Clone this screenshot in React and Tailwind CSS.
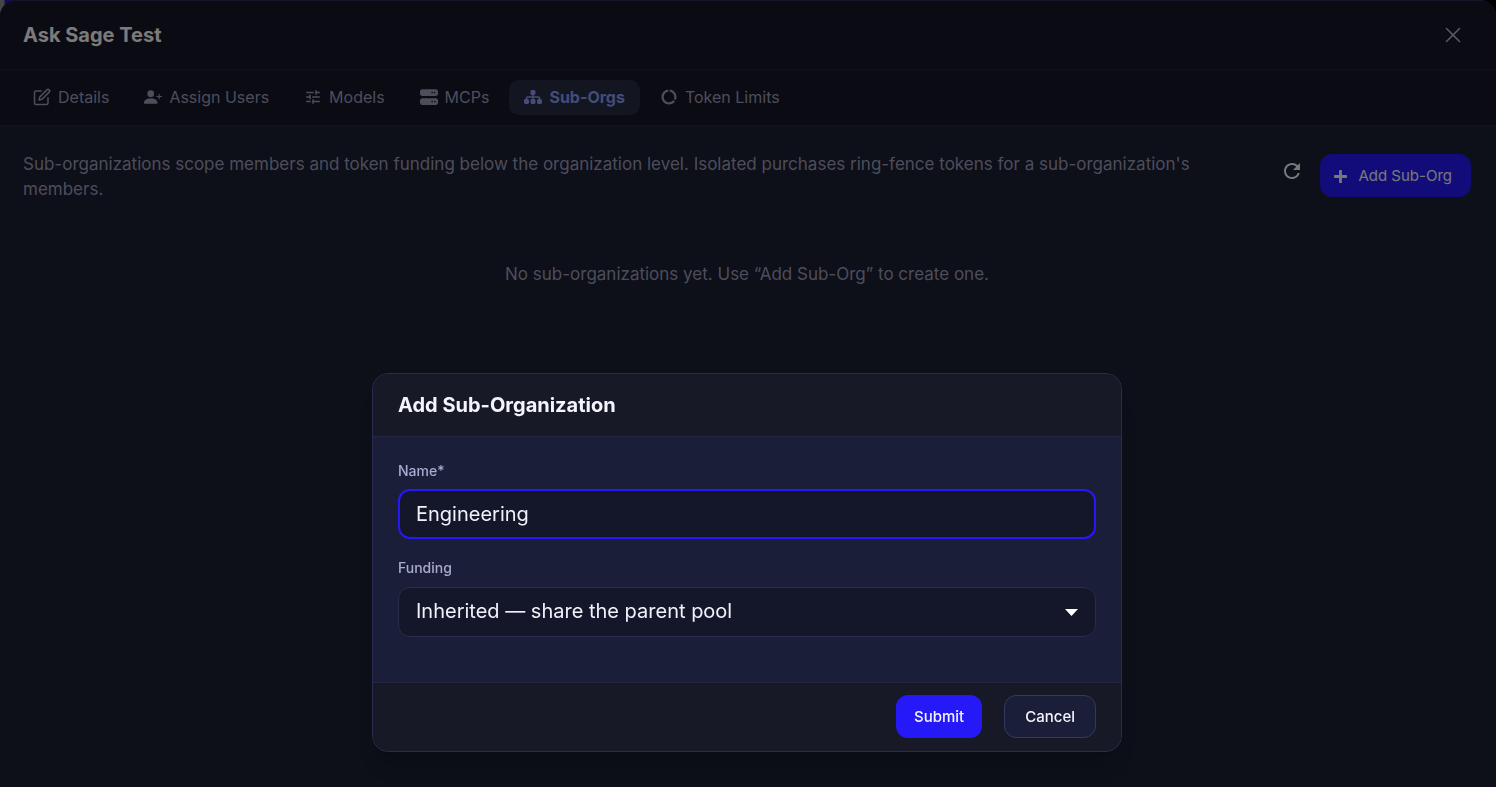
import { useState } from 'react';
import { BsPersonPlusFill } from 'react-icons/bs';
import { FaPlus } from 'react-icons/fa';
import { FaServer, FaSitemap } from 'react-icons/fa6';
import { FiEdit, FiX } from 'react-icons/fi';
import { MdDataUsage, MdRefresh, MdTune } from 'react-icons/md';

const tabs = [
  { id: 'details', label: 'Details', icon: FiEdit },
  { id: 'users', label: 'Assign Users', icon: BsPersonPlusFill },
  { id: 'models', label: 'Models', icon: MdTune },
  { id: 'mcps', label: 'MCPs', icon: FaServer },
  { id: 'suborgs', label: 'Sub-Orgs', icon: FaSitemap },
  { id: 'limits', label: 'Token Limits', icon: MdDataUsage },
];

const TabBar = ({ active, onSelect }) => (
  <nav className="flex items-center gap-[5px] px-[18px] py-2.5 border-b border-[#222236]">
    {tabs.map(({ id, label, icon: Icon }) => (
      <button
        key={id}
        onClick={() => onSelect(id)}
        className={`flex items-center gap-[7px] h-[35px] px-[15px] pb-0.5 rounded-[10px] text-base ${active === id ? 'bg-[#272a40] text-[#8a98ee] font-bold' : 'text-[#9a9cb6]'}`}
      >
        <Icon size={18} />
        {label}
      </button>
    ))}
  </nav>
);

const AddSubOrgDialog = () => {
  const [name, setName] = useState('Engineering');
  const [funding, setFunding] = useState('inherited');

  return (
    <div className="fixed inset-0 flex items-end justify-center bg-black/50 pl-4 pr-[18px] pb-[35px]">
      <form
        role="dialog"
        aria-labelledby="dialog-title"
        onSubmit={(e) => e.preventDefault()}
        className="w-full max-w-[750px] rounded-2xl border border-[#2a2c4e] bg-[#1b1e38] overflow-hidden shadow-xl"
      >
        <div className="px-[25px] py-4 bg-[#171926] border-b border-[#24263c]">
          <h2 id="dialog-title" className="text-xl leading-[30px] font-bold text-[#f4f5fc]">Add Sub-Organization</h2>
        </div>
        <div className="px-[25px] pt-6 pb-[45px]">
          <label htmlFor="name" className="block mb-2 text-sm font-medium text-[#a9abcf]">Name*</label>
          <input
            id="name"
            value={name}
            onChange={(e) => setName(e.target.value)}
            className="block w-full h-[50px] px-4 rounded-xl border-2 border-[#2619f8] bg-[#141629] text-xl text-[#f0f1fa] outline-none"
          />
          <label htmlFor="funding" className="block mt-[19px] mb-[9px] text-sm font-medium text-[#a9abcf]">Funding</label>
          <div className="relative">
            <select
              id="funding"
              value={funding}
              onChange={(e) => setFunding(e.target.value)}
              className="block w-full h-[50px] px-[17px] pb-0.5 appearance-none rounded-xl border border-[#2a2c4e] bg-[#141629] text-xl text-[#f0f1fa] outline-none"
            >
              <option value="inherited">Inherited — share the parent pool</option>
              <option value="isolated">Isolated</option>
            </select>
            <svg className="absolute right-[18px] top-[22px] pointer-events-none" width="13" height="7" viewBox="0 0 13 7" fill="#fff"><path d="M0 0h13L6.5 7z" /></svg>
          </div>
        </div>
        <div className="flex justify-end gap-[22px] px-[25px] pt-3 pb-[13px] bg-[#171926] border-t border-[#24263c]">
          <button type="submit" className="h-[43px] px-[18px] pt-0.5 rounded-xl bg-[#2619f8] text-[15px] font-medium text-[#f4f5fc]">Submit</button>
          <button type="button" className="h-[43px] px-5 pt-0.5 rounded-xl border border-[#353962] bg-[#1b1e38] text-[15px] font-medium text-[#f4f5fc]">Cancel</button>
        </div>
      </form>
    </div>
  );
};

export default function App() {
  const [tab, setTab] = useState('suborgs');

  return (
    <div className="min-h-screen bg-[linear-gradient(90deg,#8a8a90_4px,#2418a0_5px,#2418a0_14px,#000_15px)] font-['Inter',sans-serif]">
      <div className="min-h-screen flex flex-col rounded-t-2xl border-t border-[#2c2c54] bg-[#1a1e32] overflow-hidden">
        <div className="bg-[#161626]">
          <header className="flex items-center justify-between pl-[23px] pr-[30px] h-[69px] border-b border-[#222236]">
            <h1 className="text-xl font-bold text-[#f6f6f6]">Ask Sage Test</h1>
            <button aria-label="Close" className="text-[#b4b4cc]"><FiX size={26} strokeWidth={1.5} /></button>
          </header>
          <TabBar active={tab} onSelect={setTab} />
        </div>
        <main className="pl-[23px] pr-[25px] pt-[26px]">
          <div className="flex items-start justify-between gap-6">
            <p className="flex-1 max-w-[1220px] text-[17px] leading-[25px] text-[#9a9ab4]">
              Sub-organizations scope members and token funding below the organization level. Isolated purchases ring-fence tokens for a sub-organization's members.
            </p>
            <div className="flex items-start gap-4 pt-[2px]">
              <button aria-label="Refresh" className="pt-[5px] text-[#f0f0f0]"><MdRefresh size={24} /></button>
              <button className="flex items-center gap-2.5 h-[43px] pl-[13px] pr-[19px] pt-0.5 rounded-xl bg-[#2418f4] text-[15px] text-[#f0f0f0]">
                <FaPlus size={15} />
                Add Sub-Org
              </button>
            </div>
          </div>
          <p className="pt-[60px] text-center text-[17px] leading-[25px] text-[#9a9ab4]">No sub-organizations yet. Use “Add Sub-Org” to create one.</p>
        </main>
      </div>
      <AddSubOrgDialog />
    </div>
  );
}
